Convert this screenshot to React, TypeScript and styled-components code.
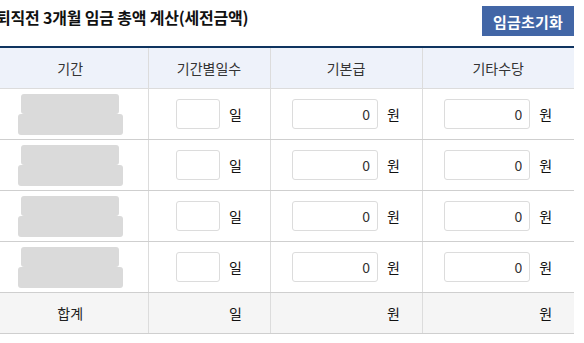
import React from "react";
import styled, { createGlobalStyle } from "styled-components";

const Global = createGlobalStyle`
  html, body { margin: 0; padding: 0; background: #fff; }
  body {
    font-family: "Noto Sans CJK KR", "Noto Sans", sans-serif;
    color: #222;
    overflow: hidden;
  }
`;

const Page = styled.div`
  width: 581px;
  margin-left: -7px;
`;

const TitleBar = styled.div`
  display: flex;
  align-items: flex-start;
  justify-content: space-between;
  height: 46px;
`;

const Title = styled.h2`
  margin: 6px 0 0 3px;
  font-size: 16px;
  font-weight: 700;
  line-height: 22px;
  color: #111;
  letter-spacing: -0.2px;
  white-space: nowrap;
`;

const ResetButton = styled.button`
  width: 92px;
  height: 30px;
  margin-top: 6px;
  border: 0;
  background: #4266a6;
  color: #fff;
  font-family: inherit;
  font-size: 15px;
  font-weight: 700;
  letter-spacing: 0.2px;
  padding: 0;
`;

const Table = styled.table`
  width: 100%;
  border-collapse: collapse;
  table-layout: fixed;
  border-top: 2px solid #0f3460;
`;

const Th = styled.th`
  height: 40px;
  padding: 0;
  background: #eef2fa;
  font-weight: 400;
  font-size: 14px;
  color: #333;
  border-bottom: 1px solid #dcdcdc;
  border-left: 1px solid #dcdcdc;
  &:first-child { border-left: 0; }
`;

const Td = styled.td`
  height: 50px;
  padding: 0;
  border-bottom: 1px solid #cfcfcf;
  border-left: 1px solid #dcdcdc;
  &:first-child { border-left: 0; }
`;

const SumRow = styled.tr`
  border-top: 1px solid #0f3460;
`;

const SumTd = styled.td`
  height: 40px;
  padding: 0;
  background: #f5f5f5;
  font-size: 14px;
  color: #222;
  text-align: center;
  border-bottom: 1px solid #cfcfcf;
  border-left: 1px solid #dcdcdc;
  &:first-child { border-left: 0; }
`;

const Skeleton = styled.div`
  display: flex;
  flex-direction: column;
  align-items: center;
`;

const SkelBar = styled.div<{ $w: number; $h: number }>`
  width: ${(p) => p.$w}px;
  height: ${(p) => p.$h}px;
  background: #dadada;
  border-radius: 3px;
`;

const Group = styled.div`
  display: flex;
  align-items: center;
  justify-content: center;
  gap: 9px;
`;

const Field = styled.input<{ $w: number }>`
  box-sizing: border-box;
  width: ${(p) => p.$w}px;
  height: 30px;
  border: 1px solid #dcdcdc;
  border-radius: 3px;
  background: #fff;
  padding: 0 7px;
  text-align: right;
  font-family: inherit;
  font-size: 14px;
  color: #333;
  outline: none;
`;

const Blank = styled.span<{ $w: number }>`
  display: inline-block;
  width: ${(p) => p.$w}px;
`;

const Unit = styled.span`
  font-size: 14px;
  color: #111;
  line-height: 20px;
`;

const rows = [0, 1, 2, 3];

export default function App() {
  return (
    <>
      <Global />
      <Page>
        <TitleBar>
          <Title>퇴직전 3개월 임금 총액 계산(세전금액)</Title>
          <ResetButton type="button">임금초기화</ResetButton>
        </TitleBar>
        <Table>
          <colgroup>
            <col style={{ width: 155 }} />
            <col style={{ width: 122 }} />
            <col style={{ width: 152 }} />
            <col style={{ width: 152 }} />
          </colgroup>
          <thead>
            <tr>
              <Th>기간</Th>
              <Th>기간별일수</Th>
              <Th>기본급</Th>
              <Th>기타수당</Th>
            </tr>
          </thead>
          <tbody>
            {rows.map((r) => (
              <tr key={r}>
                <Td>
                  <Skeleton>
                    <SkelBar $w={98} $h={20} />
                    <SkelBar $w={105} $h={21} />
                  </Skeleton>
                </Td>
                <Td>
                  <Group>
                    <Field $w={44} defaultValue="" />
                    <Unit>일</Unit>
                  </Group>
                </Td>
                <Td>
                  <Group>
                    <Field $w={86} defaultValue="0" />
                    <Unit>원</Unit>
                  </Group>
                </Td>
                <Td>
                  <Group>
                    <Field $w={86} defaultValue="0" />
                    <Unit>원</Unit>
                  </Group>
                </Td>
              </tr>
            ))}
            <SumRow>
              <SumTd>합계</SumTd>
              <SumTd>
                <Group>
                  <Blank $w={44} />
                  <Unit>일</Unit>
                </Group>
              </SumTd>
              <SumTd>
                <Group>
                  <Blank $w={86} />
                  <Unit>원</Unit>
                </Group>
              </SumTd>
              <SumTd>
                <Group>
                  <Blank $w={86} />
                  <Unit>원</Unit>
                </Group>
              </SumTd>
            </SumRow>
          </tbody>
        </Table>
      </Page>
    </>
  );
}
